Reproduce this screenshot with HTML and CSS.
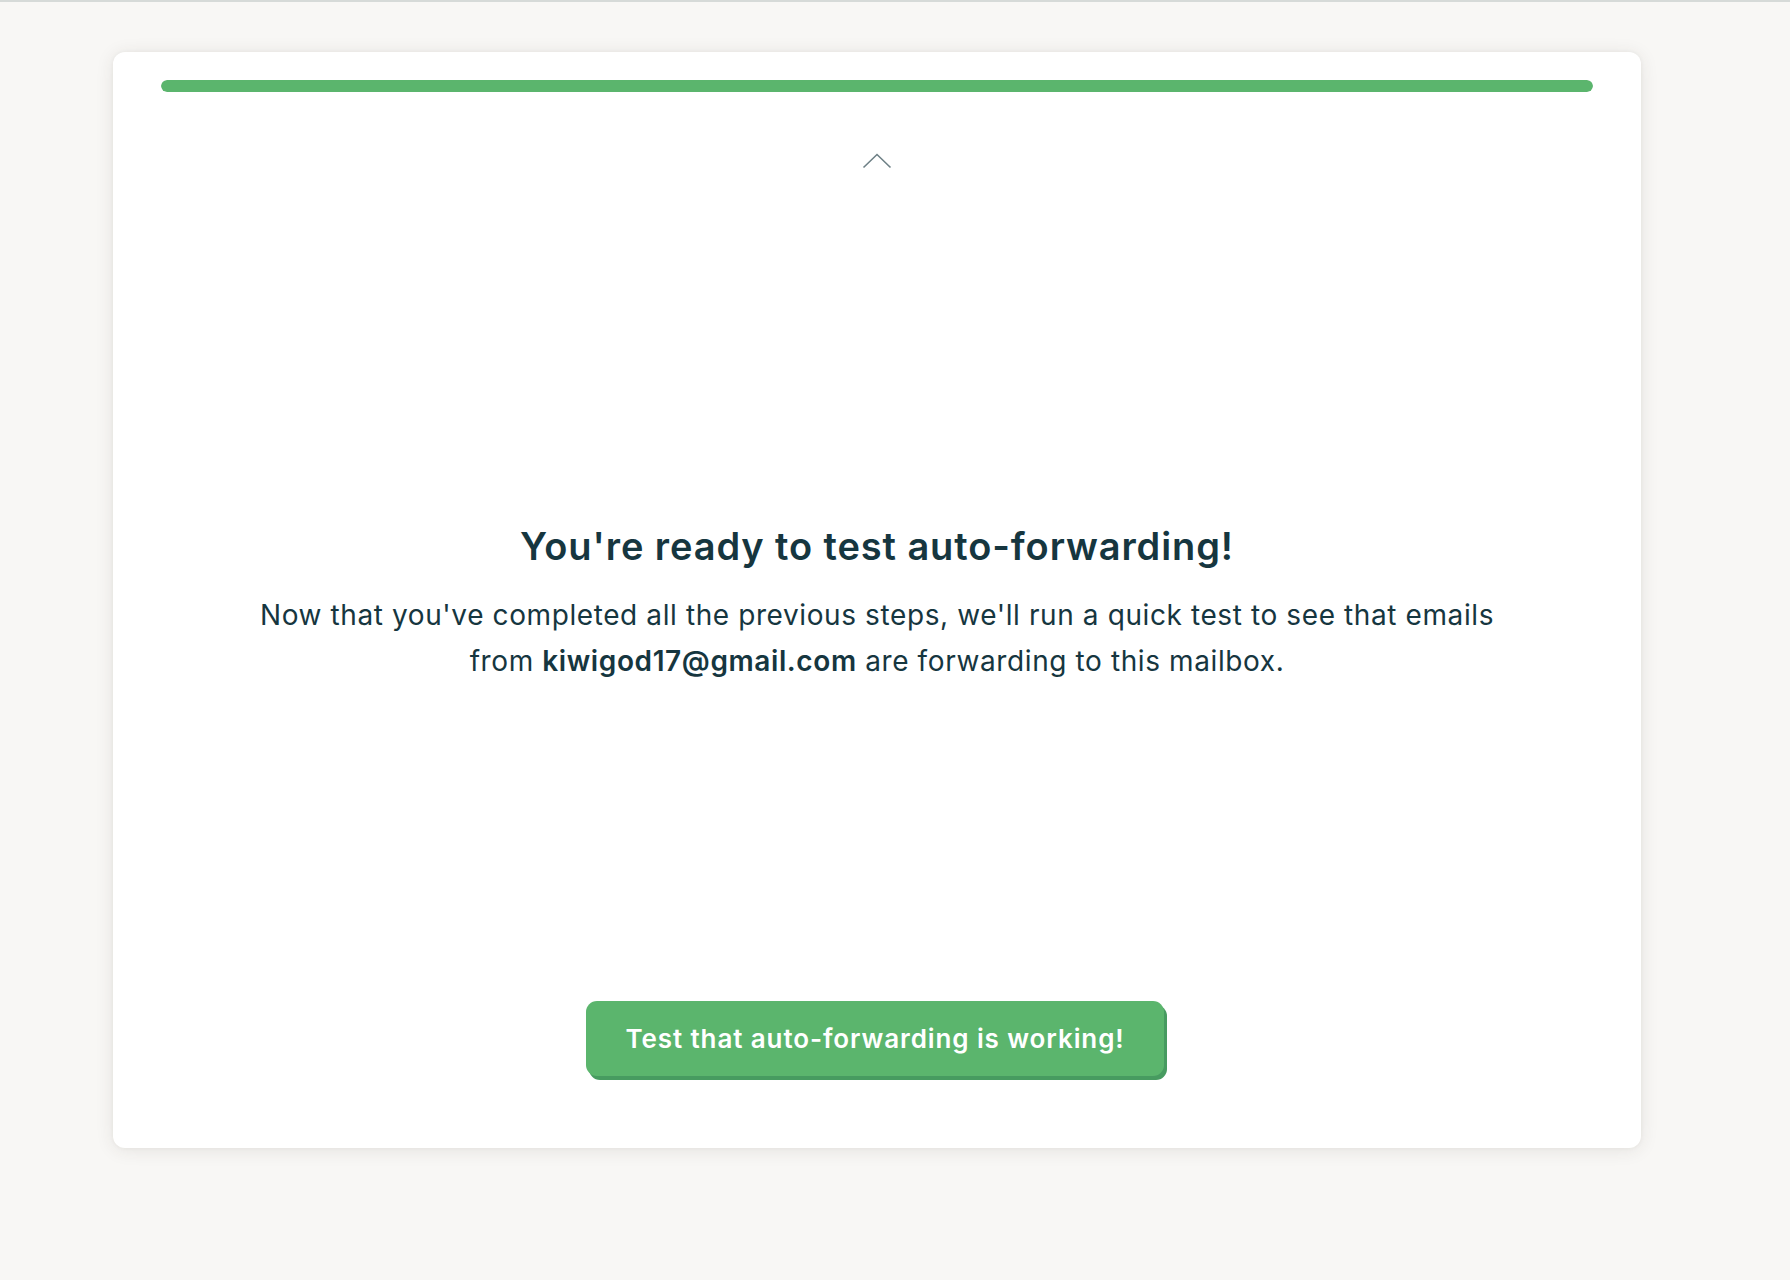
FILE: index.html
```html
<!DOCTYPE html>
<html lang="en">
<head>
<meta charset="utf-8">
<title>Test auto-forwarding</title>
<link rel="stylesheet" href="styles.css">
</head>
<body>
<div class="topline"></div>
<main class="page">
  <section class="card">
    <div class="progress"><div class="progress-fill"></div></div>
    <button class="collapse" aria-label="Collapse">
      <svg width="30" height="16" viewBox="0 0 30 16"><path d="M1.5 14.5 L15 1.5 L28.5 14.5" fill="none" stroke="#6e8086" stroke-width="1.6"/></svg>
    </button>
    <div class="content">
      <h1 class="title">You're ready to test auto-forwarding!</h1>
      <p class="desc">Now that you've completed all the previous steps, we'll run a quick test to see that emails<br>from <strong>kiwigod17@gmail.com</strong> are forwarding to this mailbox.</p>
    </div>
    <div class="actions">
      <button class="cta">Test that auto-forwarding is working!</button>
    </div>
  </section>
</main>
</body>
</html>
```
FILE: styles.css
```css
html, body {
  margin: 0;
  padding: 0;
}
body {
  background: #f8f7f5;
  font-family: Inter, "Liberation Sans", sans-serif;
  color: #16363f;
  height: 1280px;
  overflow: hidden;
}
.topline {
  height: 2px;
  background: #d6dad8;
}
.page {
  padding: 50px 0 0 113px;
}
.card {
  width: 1528px;
  height: 1096px;
  box-sizing: border-box;
  background: #ffffff;
  border-radius: 12px;
  box-shadow: 0 2px 18px rgba(60, 50, 40, 0.10), 0 0 4px rgba(60, 50, 40, 0.05);
  padding: 28px 48px 0;
  display: flex;
  flex-direction: column;
  align-items: center;
}
.progress {
  width: 100%;
  height: 12px;
  border-radius: 6px;
  background: #e6ece8;
  overflow: hidden;
}
.progress-fill {
  width: 100%;
  height: 100%;
  background: #5bb56d;
  border-radius: 6px;
}
.collapse {
  margin-top: 61px;
  background: none;
  border: 0;
  padding: 0;
  width: 30px;
  height: 16px;
  display: block;
  cursor: pointer;
}
.collapse svg {
  display: block;
}
.content {
  margin-top: 355px;
  text-align: center;
}
.title {
  margin: 0;
  font-size: 38px;
  font-weight: 600;
  line-height: 44px;
  letter-spacing: 0.9px;
}
.desc {
  margin: 24px 0 0;
  font-size: 28px;
  line-height: 46px;
  font-weight: 400;
  letter-spacing: 0.6px;
}
.desc strong {
  font-weight: 600;
}
.actions {
  margin-top: 317px;
  margin-right: 4px;
}
.cta {
  width: 578px;
  height: 75px;
  border: 0;
  border-radius: 11px;
  background: #5bb56d;
  color: #ffffff;
  font-family: Inter, "Liberation Sans", sans-serif;
  font-size: 26px;
  font-weight: 600;
  letter-spacing: 0.9px;
  box-shadow: 3px 4px 0 #479b60;
  cursor: pointer;
}
```
